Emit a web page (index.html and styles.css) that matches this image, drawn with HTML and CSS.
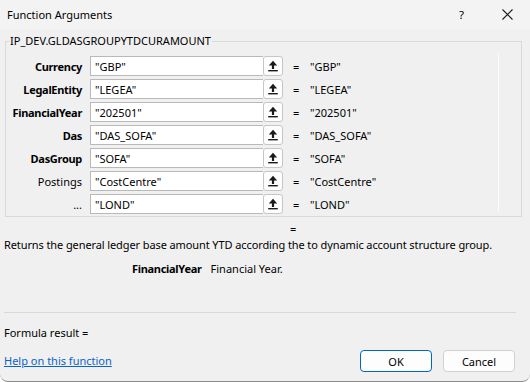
FILE: index.html
```html
<!DOCTYPE html>
<html>
<head>
<meta charset="utf-8">
<link rel="stylesheet" href="styles.css">
</head>
<body>
<div class="dialog">
  <div class="titlebar">
    <span class="title">Function Arguments</span>
    <span class="help">?</span>
    <span class="close"><svg width="11" height="11" viewBox="0 0 11 11"><path d="M0.5 0.5 L10.5 10.5 M10.5 0.5 L0.5 10.5" stroke="#1a1a1a" stroke-width="1.1" fill="none"/></svg></span>
  </div>
  <div class="group">
    <span class="legend">IP_DEV.GLDASGROUPYTDCURAMOUNT</span>
    <div class="rows">
      <div class="row"><span class="lbl b">Currency</span><span class="field"><span class="txt">"GBP"</span></span><span class="ref"><svg width="12" height="12" viewBox="0 0 12 12"><path d="M6 0.8 L10.2 5.4 H7.1 V9 H4.9 V5.4 H1.8 Z" fill="#1a1a1a"/><rect x="1.2" y="10" width="9.6" height="1.4" fill="#1a1a1a"/></svg></span><span class="eq">=</span><span class="val">"GBP"</span></div>
      <div class="row"><span class="lbl b">LegalEntity</span><span class="field"><span class="txt">"LEGEA"</span></span><span class="ref"><svg width="12" height="12" viewBox="0 0 12 12"><path d="M6 0.8 L10.2 5.4 H7.1 V9 H4.9 V5.4 H1.8 Z" fill="#1a1a1a"/><rect x="1.2" y="10" width="9.6" height="1.4" fill="#1a1a1a"/></svg></span><span class="eq">=</span><span class="val">"LEGEA"</span></div>
      <div class="row"><span class="lbl b">FinancialYear</span><span class="field"><span class="txt">"202501"</span></span><span class="ref"><svg width="12" height="12" viewBox="0 0 12 12"><path d="M6 0.8 L10.2 5.4 H7.1 V9 H4.9 V5.4 H1.8 Z" fill="#1a1a1a"/><rect x="1.2" y="10" width="9.6" height="1.4" fill="#1a1a1a"/></svg></span><span class="eq">=</span><span class="val">"202501"</span></div>
      <div class="row"><span class="lbl b">Das</span><span class="field"><span class="txt">"DAS_SOFA"</span></span><span class="ref"><svg width="12" height="12" viewBox="0 0 12 12"><path d="M6 0.8 L10.2 5.4 H7.1 V9 H4.9 V5.4 H1.8 Z" fill="#1a1a1a"/><rect x="1.2" y="10" width="9.6" height="1.4" fill="#1a1a1a"/></svg></span><span class="eq">=</span><span class="val">"DAS_SOFA"</span></div>
      <div class="row"><span class="lbl b">DasGroup</span><span class="field"><span class="txt">"SOFA"</span></span><span class="ref"><svg width="12" height="12" viewBox="0 0 12 12"><path d="M6 0.8 L10.2 5.4 H7.1 V9 H4.9 V5.4 H1.8 Z" fill="#1a1a1a"/><rect x="1.2" y="10" width="9.6" height="1.4" fill="#1a1a1a"/></svg></span><span class="eq">=</span><span class="val">"SOFA"</span></div>
      <div class="row"><span class="lbl">Postings</span><span class="field"><span class="txt">"CostCentre"</span></span><span class="ref"><svg width="12" height="12" viewBox="0 0 12 12"><path d="M6 0.8 L10.2 5.4 H7.1 V9 H4.9 V5.4 H1.8 Z" fill="#1a1a1a"/><rect x="1.2" y="10" width="9.6" height="1.4" fill="#1a1a1a"/></svg></span><span class="eq">=</span><span class="val">"CostCentre"</span></div>
      <div class="row"><span class="lbl">...</span><span class="field"><span class="txt">"LOND"</span></span><span class="ref"><svg width="12" height="12" viewBox="0 0 12 12"><path d="M6 0.8 L10.2 5.4 H7.1 V9 H4.9 V5.4 H1.8 Z" fill="#1a1a1a"/><rect x="1.2" y="10" width="9.6" height="1.4" fill="#1a1a1a"/></svg></span><span class="eq">=</span><span class="val">"LOND"</span></div>
    </div>
  </div>
  <div class="result-eq">=</div>
  <div class="desc">Returns the general ledger base amount YTD according the to dynamic account structure group.</div>
  <div class="param"><span class="pname">FinancialYear</span><span class="pdesc">Financial Year.</span></div>
  <div class="sep"></div>
  <div class="formula">Formula result =</div>
  <div class="footer">
    <a class="link" href="#">Help on this function</a>
    <div class="buttons">
      <span class="btn ok">OK</span>
      <span class="btn">Cancel</span>
    </div>
  </div>
</div>
</body>
</html>
```

FILE: styles.css
```css
* { box-sizing: border-box; }
html, body { margin: 0; padding: 0; background: #ffffff; }
body {
  font-family: "Noto Sans", Lato, sans-serif;
  font-size: 11px;
  color: #000;
}
.dialog {
  width: 530px;
  height: 382px;
  background: #f0f0f0;
  border-bottom: 1px solid #8c8c8c;
  border-radius: 0 0 8px 8px;
  overflow: hidden;
}
.titlebar {
  height: 29px;
  background: #f3f3f3;
  display: flex;
  align-items: center;
  padding-left: 7px;
  margin-bottom: 1px;
}
.title { flex: 1; line-height: 16px; }
.help { width: 43px; line-height: 16px; font-size: 11.5px; }
.close { width: 28px; display: flex; align-items: center; }
.group {
  margin: 12px 8px 0 5px;
  border: 1px solid #d9d9d9;
  height: 176px;
}
.legend {
  display: block;
  width: max-content;
  margin: -9px 0 0 3px;
  padding: 0 1px;
  background: #f0f0f0;
  line-height: 16px;
}
.rows {
  width: 493px;
  margin-top: 5px;
  padding-top: 2px;
  height: 158px;
  border-right: 1px solid #fbfbfb;
  display: flex;
  flex-direction: column;
  gap: 3px;
}
.row {
  display: flex;
  align-items: center;
  height: 20px;
}
.lbl {
  width: 76px;
  text-align: right;
  margin-right: 8px;
}
.b { font-weight: bold; letter-spacing: -0.3px; }
.field {
  width: 173px;
  height: 20px;
  background: #fff;
  border: 1px solid #b9b9b9;
  border-right: none;
  display: flex;
  align-items: center;
  padding-left: 4px;
}
.ref {
  width: 20px;
  height: 20px;
  background: #fdfdfd;
  border: 1px solid #c6c6c6;
  border-radius: 3px;
  display: flex;
  align-items: center;
  justify-content: center;
}
.eq { margin-left: 10px; width: 17px; }
.result-eq {
  margin-top: 4px;
  padding-left: 290px;
  line-height: 16px;
}
.desc {
  padding-left: 4px;
  line-height: 16px;
  letter-spacing: -0.1px;
}
.param {
  margin-top: 8px;
  padding-left: 132px;
  line-height: 16px;
  display: flex;
  gap: 9px;
}
.pname { font-weight: bold; letter-spacing: -0.3px; }
.sep {
  margin: 35px 14px 0 4px;
  height: 1px;
  background: #d9d9d9;
}
.formula {
  margin-top: 12px;
  padding-left: 4px;
  line-height: 16px;
}
.footer {
  margin-top: 9px;
  display: flex;
  align-items: center;
  justify-content: space-between;
  padding: 0 15px 0 4px;
}
.link {
  color: #0b63c8;
  text-decoration: underline;
  line-height: 16px;
}
.buttons { display: flex; gap: 11px; }
.btn {
  width: 72px;
  height: 22px;
  background: #fdfdfd;
  border: 1px solid #d0d0d0;
  border-radius: 4px;
  display: flex;
  align-items: center;
  justify-content: center;
}
.ok { border-color: #0067c0; }
```
